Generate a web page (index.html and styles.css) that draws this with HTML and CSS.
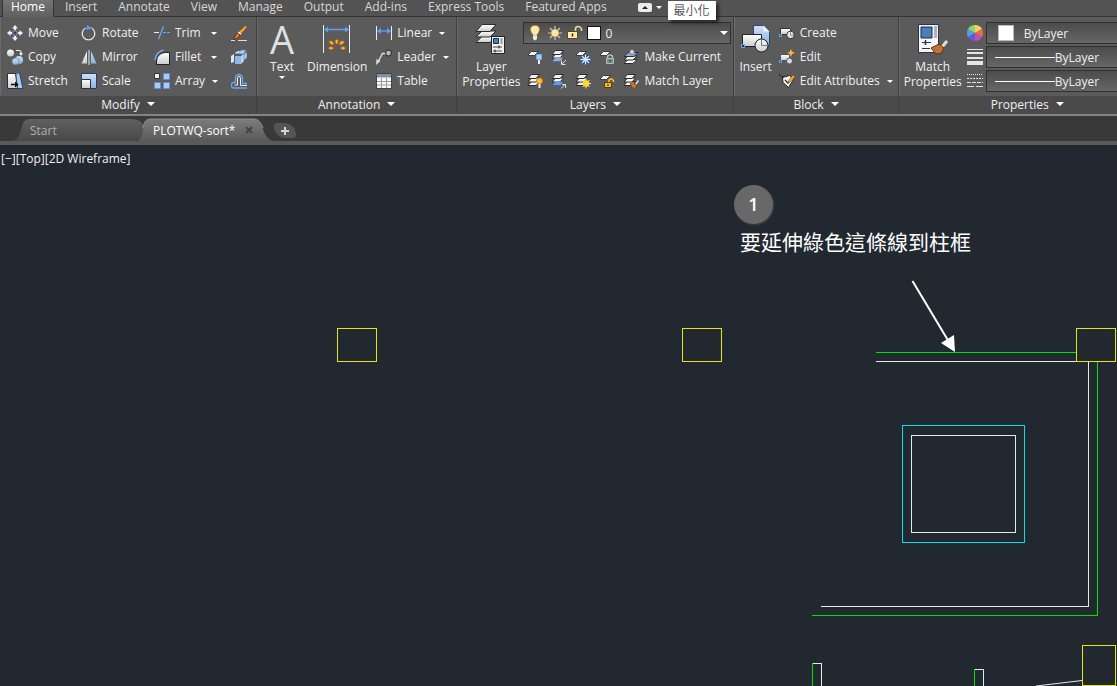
FILE: index.html
```
<!DOCTYPE html>
<html lang="zh-Hant">
<head>
    <meta charset="UTF-8">
    <meta name="viewport" content="width=device-width, initial-scale=1.0">
    <title>PLOTWQ-sort</title>
    <link rel="stylesheet" href="styles.css">
</head>
<body>
    <!-- shared gradients and layer shapes -->
    <svg class="defs" aria-hidden="true">
        <defs>
            <linearGradient id="g-white" x1="0" y1="0" x2="0" y2="1"><stop offset="0" stop-color="#ffffff"/><stop offset="1" stop-color="#c9ccd0"/></linearGradient>
            <linearGradient id="g-blue" x1="0" y1="0" x2="0" y2="1"><stop offset="0" stop-color="#cfe2f8"/><stop offset="1" stop-color="#86b0e2"/></linearGradient>
            <linearGradient id="g-tab" x1="0" y1="0" x2="0" y2="1"><stop offset="0" stop-color="#606060"/><stop offset="1" stop-color="#484848"/></linearGradient>
            <linearGradient id="g-tab-on" x1="0" y1="0" x2="0" y2="1"><stop offset="0" stop-color="#7c7c7c"/><stop offset="1" stop-color="#5a5a5a"/></linearGradient>
            <symbol id="sheets" viewBox="0 0 16 16">
                <g fill="#f4f4f4" stroke="#2c2c2c"><path d="M1 12.500l3.500-4h8l-3.500 4z"/><path d="M1 9l3.500-4h8L9 9z"/><path d="M1 5.500l3.500-4h8l-3.500 4z"/></g>
            </symbol>
            <symbol id="sheet" viewBox="0 0 16 16"><path d="M0.500 6.500l4-4h7l-4 4z" fill="#f4f4f4" stroke="#3c3c3c"/></symbol>
        </defs>
    </svg>

    <header class="ribbon">
        <nav class="ribbon-tabs">
            <button class="ribbon-tab active">Home</button>
            <button class="ribbon-tab">Insert</button>
            <button class="ribbon-tab">Annotate</button>
            <button class="ribbon-tab">View</button>
            <button class="ribbon-tab">Manage</button>
            <button class="ribbon-tab">Output</button>
            <button class="ribbon-tab">Add-ins</button>
            <button class="ribbon-tab">Express Tools</button>
            <button class="ribbon-tab">Featured Apps</button>
            <div class="minimize">
                <button class="minimize-btn" aria-label="最小化"><svg width="14" height="9" viewBox="0 0 14 9"><rect width="14" height="9" rx="2" fill="#ececec"/><path d="M4 6l3-3 3 3z" fill="#222"/></svg></button>
                <button class="caret-btn" aria-label="選項"><i class="caret"></i></button>
                <span class="tooltip">最小化</span>
            </div>
        </nav>

        <div class="panels">
            <section class="panel">
                <div class="panel-body modify">
                    <div class="col col-a">
                        <button class="tool"><svg class="icon" viewBox="0 0 16 16"><path d="M8 0l3 3.500H9V6H7V3.500H5zM8 16l3-3.500H9V10H7v2.500H5zM0 8l3.500-3v2H6v2H3.500v2zM16 8l-3.500-3v2H10v2h2.500v2z" fill="#f0f0f0"/><path d="M5 5h6v6H5z" fill="#4d4d4d"/><path d="M6 6h4v4H6z" fill="#3c3c3c" stroke="#6aa5f8"/></svg>Move</button>
                        <button class="tool"><svg class="icon" viewBox="0 0 16 16"><circle cx="3.500" cy="4" r="3.500" fill="url(#g-white)"/><circle cx="12" cy="11" r="4" fill="url(#g-blue)"/><circle cx="8.500" cy="12.500" r="3.500" fill="url(#g-blue)" stroke="#5d6f86" stroke-width=".6"/><path d="M9 1.500h3q2 0 2 2V5" fill="none" stroke="#eee" stroke-width="1.200"/><path d="M12 4h4l-2 3z" fill="#eee"/></svg>Copy</button>
                        <button class="tool"><svg class="icon" viewBox="0 0 16 16"><path d="M9 0h3.500L16 15.500H8z" fill="#a9ccf4" stroke="#27406b"/><path d="M0.500 0.500h8l2 15h-10z" fill="url(#g-white)" stroke="#303030"/><path d="M4 11.500h5" stroke="#000" stroke-width="1.500"/><path d="M8 8.500l3.500 3L8 14.500z" fill="#000"/></svg>Stretch</button>
                    </div>
                    <div class="col col-b">
                        <button class="tool"><svg class="icon" viewBox="0 0 16 16"><path d="M10.500 3A6.300 6.300 0 1 1 4.500 3" fill="none" stroke="#e4e4e4" stroke-width="1.300"/><path d="M5 3.500Q8 1.500 11 3.500" fill="none" stroke="#6aa5f8" stroke-width="1.300"/><path d="M5.500 0L10 2.500 6.500 5.500z" fill="#5e9df5"/></svg>Rotate</button>
                        <button class="tool"><svg class="icon" viewBox="0 0 16 16"><path d="M6 2v12.500H0.500z" fill="url(#g-white)"/><path d="M10 2v12.500h5.500z" fill="url(#g-blue)"/><path d="M8 1v15" stroke="#eee"/></svg>Mirror</button>
                        <button class="tool"><svg class="icon" viewBox="0 0 16 16"><path d="M0.500 0.500h15v15h-15z" fill="url(#g-blue)" stroke="#27406b"/><path d="M0.500 6.500h9v9h-9z" fill="url(#g-white)" stroke="#303030"/></svg>Scale</button>
                    </div>
                    <div class="col col-c">
                        <div class="split"><button class="tool"><svg class="icon" viewBox="0 0 16 16"><path d="M0 7.500h5" stroke="#eee"/><path d="M4.500 14L9.500 1.500" stroke="#6aa5f8" stroke-width="1.300"/><path d="M9 7.500h3m1 0h3" stroke="#6aa5f8"/></svg>Trim</button><button class="caret-btn" aria-label="Trim options"><i class="caret"></i></button></div>
                        <div class="split"><button class="tool"><svg class="icon" viewBox="0 0 16 16"><path d="M15.500 3.500v12h-13V12Q3 4.500 11 3.500z" fill="url(#g-white)" stroke="#222"/><path d="M1 11Q2 3 9.500 1" fill="none" stroke="#6aa5f8" stroke-width="1.500"/></svg>Fillet</button><button class="caret-btn" aria-label="Fillet options"><i class="caret"></i></button></div>
                        <div class="split"><button class="tool"><svg class="icon" viewBox="0 0 16 16"><path d="M0.500 0.500h5v5h-5z" fill="#eee" stroke="#333"/><path d="M9.500 0.500h6v6h-6zM0.500 9.500h6v6h-6zM9.500 9.500h6v6h-6z" fill="#a9ccf4" stroke="#6090d0"/></svg>Array</button><button class="caret-btn" aria-label="Array options"><i class="caret"></i></button></div>
                    </div>
                    <div class="col">
                        <button class="tool" aria-label="Erase"><svg class="icon" viewBox="0 0 16 16"><path d="M0 15.500h4M7 15.500h9" stroke="#ddd"/><path d="M14.500 0.500L16 2l-5.500 6.500L8 6.500z" fill="#ffa62b" stroke="#8a450c" stroke-width=".6"/><path d="M8 6.500l2.500 2L9 10 6.500 8z" fill="#f2f2f2"/><path d="M6.500 8L9 10Q7.500 14 2.500 14.500 4 12 4.500 10z" fill="#ee7a24" stroke="#5b1d08" stroke-width=".8"/></svg></button>
                        <button class="tool" aria-label="Explode"><svg class="icon" viewBox="0 0 16 16"><path d="M0 7l3-2v8l-3 1zM4 4l3-2h5l-2 2.500H4z" fill="#d7e7fa"/><path d="M4 7h6v8H4z" fill="#8db7e6"/><path d="M10 7l3-2.500V12l-3 3z" fill="#b8d3f2"/><path d="M7 5l3-4h5l-2 4zM13 5l3-2v6l-3 2z" fill="#a9ccf4" stroke="#56769c" stroke-width=".6"/></svg></button>
                        <button class="tool" aria-label="Offset"><svg class="icon" viewBox="0 0 16 16"><path d="M16 10.500h-4.500V5a3.500 3.500 0 0 0-7 0v4.500H3a2.500 2.500 0 0 0 0 5.500h13" fill="none" stroke="#6aa5f8" stroke-width="1.300"/><path d="M16 12.500H9.500V5a1.500 1.500 0 0 0-3 0v7H3.500" fill="none" stroke="#eee"/></svg></button>
                    </div>
                </div>
                <button class="panel-title">Modify<i class="caret big"></i></button>
            </section>

            <section class="panel">
                <div class="panel-body annotation">
                    <button class="tool-big"><span class="letter">A</span>Text<i class="caret"></i></button>
                    <button class="tool-big"><svg class="icon-big" viewBox="0 0 32 32"><path d="M2.500 2v28M28.500 2v28" stroke="#eee"/><path d="M4 6.500h23" stroke="#5e9df5" stroke-width="1.500"/><path d="M3 6.500l4-3v6zM28 6.500l-4-3v6z" fill="#5e9df5"/><g fill="#ffb52e" stroke="#b7660a" stroke-width=".7"><path d="M14 18l1.500-2 2 2-1 3h-1.500zM8 18h3l2 3-2 1-2.500-2zM23 18h-3l-2 3 2 1 3-2zM7 25l3-1.500 3 1.500-3 2zM25 25l-3-1.500-3 1.500 3 2z"/></g></svg>Dimension</button>
                    <div class="col">
                        <div class="split"><button class="tool"><svg class="icon" viewBox="0 0 16 16"><path d="M0.500 1v14M15.500 1v14" stroke="#eee"/><path d="M2 6h12" stroke="#5e9df5" stroke-width="1.300"/><path d="M1 6l4-3v6zM15 6l-4-3v6z" fill="#5e9df5"/></svg>Linear</button><button class="caret-btn" aria-label="Linear options"><i class="caret"></i></button></div>
                        <div class="split"><button class="tool"><svg class="icon" viewBox="0 0 16 16"><path d="M10 4.500H6.500L2.500 12" fill="none" stroke="#e4e4e4" stroke-width="1.300"/><path d="M0 16l.5-6 4 2z" fill="#ddd"/><circle cx="12.500" cy="4" r="3" fill="#b5b5b5" stroke="#222"/></svg>Leader</button><button class="caret-btn" aria-label="Leader options"><i class="caret"></i></button></div>
                        <button class="tool"><svg class="icon" viewBox="0 0 16 16"><path d="M0.500 0.500h15v15h-15z" fill="#fafafa" stroke="#444"/><path d="M1 1h14v3.500H1z" fill="#8090a4"/><path d="M1 8.500h14M1 12h14M5.500 5v10M10.500 5v10" stroke="#999"/></svg>Table</button>
                    </div>
                </div>
                <button class="panel-title">Annotation<i class="caret big"></i></button>
            </section>

            <section class="panel">
                <div class="panel-body layers">
                    <button class="tool-big"><svg class="icon-big" viewBox="0 0 32 32"><g fill="url(#g-white)" stroke="#2a2a2a"><path d="M1 19.500l6-6h14l-6 6z"/><path d="M1 14l6-6h14l-6 6z"/><path d="M1 8.500l6-7h14l-6 7z"/></g><path d="M16.500 13.500h13v17h-13z" fill="#f2f2f2" stroke="#222"/><path d="M18.500 15.500h5v5h-5z" fill="#3f7fd4" stroke="#1d2c45"/><path d="M26.500 15v6" stroke="#999" stroke-width="2"/><path d="M18 24h9M18 28h9" stroke="#444"/><path d="M24 22.500v3M20 26.500v3" stroke="#222"/></svg>Layer<br>Properties</button>
                    <div class="col">
                        <label class="combo layer-combo">
                            <svg class="icon" viewBox="0 0 16 16"><path d="M8 0.500c6 0 5 6 2 9v1H6v-1C3 6.500 2 .5 8 .5z" fill="#ffe9a3" stroke="#b38a3c" stroke-width=".6"/><path d="M6 10.500h4V14l-2 1.500L6 14z" fill="#eee"/></svg>
                            <svg class="icon" viewBox="0 0 16 16"><path d="M8 1v14M1 8h14M3 3l10 10M13 3L3 13" stroke="#cfcabd" stroke-width="1.200"/><circle cx="8" cy="8" r="4" fill="#ffe7a0" stroke="#8b8067" stroke-width=".6"/></svg>
                            <svg class="icon" viewBox="0 0 16 16"><path d="M8.500 7V4Q8.500 1.500 11 1.500T14.500 4v2" fill="none" stroke="#ecd690" stroke-width="1.600"/><path d="M0.500 6.500h10v7h-10z" fill="#ffe9a3" stroke="#56482a"/><path d="M5.500 8.500v3" stroke="#222" stroke-width="1.500"/></svg>
                            <i class="swatch dark"></i>
                            <select aria-label="Layer"><option>0</option></select>
                            <i class="caret big"></i>
                        </label>
                        <div class="icon-row">
                            <button class="tool" aria-label="Off"><svg class="icon" viewBox="0 0 16 16"><use href="#sheet"/><path d="M9.500 5.500h5v5h-5z" fill="#a9ccf4" stroke="#6aa5f8"/><path d="M11 11h2v4h-2z" fill="#eee"/></svg></button>
                            <button class="tool" aria-label="Isolate"><svg class="icon" viewBox="0 0 16 16"><use href="#sheets"/><path d="M1 12.500l3.500-4h8l-3.500 4z" fill="#86b0e2"/><path d="M15 11l-4 4M10.500 11.500V15.500h4" fill="none" stroke="#ddd"/></svg></button>
                            <button class="tool" aria-label="Freeze"><svg class="icon" viewBox="0 0 16 16"><use href="#sheet"/><circle cx="10.500" cy="10.500" r="5" fill="#274d80"/><path d="M10.500 5.500v10M5.500 10.500h10M7 7l7 7M14 7l-7 7" stroke="#d5e8ff" stroke-width="1.300"/></svg></button>
                            <button class="tool" aria-label="Lock"><svg class="icon" viewBox="0 0 16 16"><use href="#sheet"/><path d="M8.500 10V8q0-2 2.500-2t2.500 2v2" fill="none" stroke="#a9bdbb" stroke-width="1.500"/><path d="M7.500 9.500h7v5h-7z" fill="#6f8f8d" stroke="#a9bdbb"/><path d="M11 11v2" stroke="#333"/></svg></button>
                            <button class="tool"><svg class="icon" viewBox="0 0 16 16"><g fill="#f4f4f4" stroke="#2c2c2c"><path d="M1 14.500l4-4h9l-4 4z"/><path d="M1 11l4-4h9l-4 4z"/><path d="M1 7.500l4-4h10l-4 4z" fill="#7fb0ee"/></g><circle cx="9" cy="3" r="2.500" fill="#d5d5d5" stroke="#555" stroke-width=".7"/></svg>Make Current</button>
                        </div>
                        <div class="icon-row">
                            <button class="tool" aria-label="Turn all on"><svg class="icon" viewBox="0 0 16 16"><use href="#sheets"/><circle cx="12.500" cy="8" r="3" fill="#ffbd3c" stroke="#e8750c"/><path d="M11.500 11h2v4h-2z" fill="#eee"/></svg></button>
                            <button class="tool" aria-label="Unisolate"><svg class="icon" viewBox="0 0 16 16"><use href="#sheets"/><path d="M1 12.500l3.500-4h8l-3.500 4z" fill="#5e9df5"/><path d="M10 15.500l4-4M11 11.500h3.500V15" fill="none" stroke="#ddd"/></svg></button>
                            <button class="tool" aria-label="Thaw all"><svg class="icon" viewBox="0 0 16 16"><use href="#sheets"/><path d="M11 5.500v10M6 10.500h10M7.500 7l7 7M14.500 7l-7 7" stroke="#f0e8b0"/><circle cx="11" cy="10.500" r="3.300" fill="#ffdc1e"/></svg></button>
                            <button class="tool" aria-label="Unlock"><svg class="icon" viewBox="0 0 16 16"><use href="#sheet"/><path d="M10 10V8q0-2 2-2t2.500 2v1" fill="none" stroke="#ffc52e" stroke-width="1.500"/><path d="M5.500 9.500h7v5h-7z" fill="#ffb819" stroke="#5b3d05"/><path d="M9 11v2" stroke="#222"/></svg></button>
                            <button class="tool"><svg class="icon" viewBox="0 0 16 16"><use href="#sheets"/><path d="M15.500 7.500l-3 4" stroke="#ddd" stroke-width="1.500"/><path d="M7 10.500l3-1 4 3-2.500 3-2.500-1z" fill="#c8782c" stroke="#6d3a0c" stroke-width=".7"/></svg>Match Layer</button>
                        </div>
                    </div>
                </div>
                <button class="panel-title">Layers<i class="caret big"></i></button>
            </section>

            <section class="panel">
                <div class="panel-body block">
                    <button class="tool-big"><svg class="icon-big" viewBox="0 0 32 32"><path d="M13.500 2.500h10l6 6v14h-16z" fill="url(#g-blue)" stroke="#2d4669"/><path d="M23.500 2.500l6 6h-6z" fill="#eef5ff"/><path d="M2.500 11.500h19v12h-19z" fill="url(#g-white)" stroke="#222"/><circle cx="21.500" cy="22.500" r="6.500" fill="url(#g-white)" stroke="#222"/><path d="M21.500 16v6.500H28" fill="none" stroke="#777"/><path d="M1.500 21.500h3v3h-3z" fill="#333" stroke="#6aa5f8"/></svg>Insert</button>
                    <div class="col">
                        <button class="tool"><svg class="icon" viewBox="0 0 16 16"><path d="M1.500 3.500h10v6h-10z" fill="url(#g-white)" stroke="#333"/><circle cx="11.500" cy="10" r="3.800" fill="url(#g-white)" stroke="#333"/><path d="M11.500 6.500V10H15" fill="none" stroke="#888"/><path d="M0.500 9.500h2v2h-2z" fill="#333" stroke="#6aa5f8"/></svg>Create</button>
                        <button class="tool"><svg class="icon" viewBox="0 0 16 16"><path d="M1.500 5.500h9v6h-9z" fill="url(#g-white)" stroke="#555"/><circle cx="10.500" cy="12" r="3" fill="#cfdded" stroke="#555"/><path d="M12 0l1 2.500L16 4l-3 1-1 3-1.500-3L8 4l2.500-1z" fill="#ffb52e"/><path d="M0.500 11.500h2v2h-2z" fill="#333" stroke="#6aa5f8"/></svg>Edit</button>
                        <div class="split"><button class="tool"><svg class="icon" viewBox="0 0 16 16"><path d="M3.500 4.500l7-2 4 4-5 8-5.500-5z" fill="#f4f4f4" stroke="#222"/><path d="M0.500 1q0 3 4.500 3" fill="none" stroke="#222"/><path d="M6 7l3 3 3-3" fill="none" stroke="#333" stroke-width="1.300"/><path d="M14 2l2 1.500-5 5.500-2 .5.500-2z" fill="#ffad28" stroke="#8b4a0a" stroke-width=".6"/></svg>Edit Attributes</button><button class="caret-btn" aria-label="Edit Attributes options"><i class="caret"></i></button></div>
                    </div>
                </div>
                <button class="panel-title">Block<i class="caret big"></i></button>
            </section>

            <section class="panel panel-last">
                <div class="panel-body properties">
                    <button class="tool-big"><svg class="icon-big" viewBox="0 0 32 32"><path d="M1.500 1.500h20v28h-20z" fill="#f4f6f9" stroke="#26334a"/><path d="M4 4h11v11H4z" fill="#4a7fb8" stroke="#1d2c45"/><path d="M18.500 3v12" stroke="#aab3bf" stroke-width="3"/><path d="M5 19.500h9M5 25.500h8" stroke="#333"/><path d="M8.500 17v5" stroke="#26334a" stroke-width="1.500"/><path d="M30 18l-5 6" stroke="#e8dccb" stroke-width="3"/><path d="M14 25l8-4 5 4-3 5.500-5 .5z" fill="#bd7338" stroke="#5b3110"/></svg>Match<br>Properties</button>
                    <div class="col prop-rows">
                        <div class="prop-row">
                            <svg class="icon" viewBox="0 0 16 16"><path d="M8 8V0a8 8 0 0 1 7 4z" fill="#f5d25c"/><path d="M8 8l7-4a8 8 0 0 1 0 8z" fill="#ea6a4a"/><path d="M8 8l7 4a8 8 0 0 1-7 4z" fill="#b856b8"/><path d="M8 8v8a8 8 0 0 1-7-4z" fill="#6a56cc"/><path d="M8 8l-7 4a8 8 0 0 1 0-8z" fill="#4f9fe6"/><path d="M8 8L1 4a8 8 0 0 1 7-4z" fill="#8fd66a"/></svg>
                            <label class="combo"><i class="swatch"></i><select aria-label="Object color"><option>ByLayer</option></select></label>
                        </div>
                        <div class="prop-row">
                            <svg class="icon" viewBox="0 0 16 16"><path d="M0 0h16v1H0zM0 3h16v2H0zM0 8h16v2H0zM0 12h16v4H0z" fill="#e4e4e4"/></svg>
                            <label class="combo"><i class="line-sample"></i><select aria-label="Lineweight"><option>ByLayer</option></select></label>
                        </div>
                        <div class="prop-row">
                            <svg class="icon" viewBox="0 0 16 16" stroke="#e4e4e4"><path d="M0 1.500h16" stroke-dasharray="1 1"/><path d="M0 5.500h16" stroke-dasharray="2 1"/><path d="M0 9.500h16" stroke-dasharray="4 1"/><path d="M0 13.500h16" stroke-dasharray="7 2"/></svg>
                            <label class="combo"><i class="line-sample"></i><select aria-label="Linetype"><option>ByLayer</option></select></label>
                        </div>
                    </div>
                </div>
                <button class="panel-title">Properties<i class="caret big"></i></button>
            </section>
        </div>
    </header>

    <nav class="file-tabs">
        <button class="file-tab"><svg class="tab-shape" viewBox="0 0 132 23" preserveAspectRatio="none"><path d="M0 23Q7 22 9 12 11 1 17 1H120Q131 1 132 11V13Q131 23 120 23z" fill="url(#g-tab)"/></svg>Start</button>
        <div class="file-tab active"><svg class="tab-shape" viewBox="0 0 136 23" preserveAspectRatio="none"><path d="M0 23Q4 20 5 12 6 1 12 1H116Q122 1 125 11 128 22 136 23z" fill="url(#g-tab-on)"/><path d="M5 10Q6 1 12 1H116Q122 1 125 10" fill="none" stroke="#909090"/></svg><button class="file-name">PLOTWQ-sort*</button><button class="close" aria-label="Close"><svg width="8" height="8" viewBox="0 0 8 8"><path d="M1 1l6 6M7 1L1 7" stroke="#444" stroke-width="2"/></svg></button></div>
        <button class="new-tab" aria-label="New"><svg width="8" height="8" viewBox="0 0 8 8"><path d="M4 0v8M0 4h8" stroke="#d5d5d5" stroke-width="2"/></svg></button>
    </nav>

    <main class="model">
        <div class="view-label"><button>[−]</button><button>[Top]</button><button>[2D Wireframe]</button></div>
        <svg class="drawing">
            <g fill="none" shape-rendering="crispEdges">
                <!-- beams -->
                <path d="M876 216.500H1076M1088.500 217V461.500H821" stroke="#e8e8e8"/>
                <path d="M876 207.500H1077" stroke="#00e000"/>
                <path d="M1097.500 217V470.500" stroke="#00e000"/>
                <path d="M812 470.500H1098" stroke="#00e000"/>
                <!-- columns -->
                <g stroke="#e6e600">
                    <rect x="337.500" y="183.500" width="39" height="33"/>
                    <rect x="682.500" y="183.500" width="39" height="33"/>
                    <rect x="1076.500" y="183.500" width="39" height="33"/>
                    <rect x="1082.500" y="500.500" width="33" height="40"/>
                </g>
                <!-- opening -->
                <rect x="902.500" y="280.500" width="122" height="117" stroke="#00e0e8"/>
                <rect x="911.500" y="290.500" width="104" height="97" stroke="#e8e8e8"/>
                <!-- stubs -->
                <path d="M812 518.500H821.500V560M974 524.500H983.500V560" stroke="#e8e8e8"/>
                <path d="M812.500 518V560M974.500 524V560" stroke="#00e000"/>
            </g>
            <path d="M1036 541L1082 535.500" stroke="#e8e8e8"/>
            <path d="M912.500 136L949 197" stroke="#fff" stroke-width="2"/>
            <path d="M955 207L941 198 954 190z" fill="#fff"/>
        </svg>
        <div class="note">
            <span class="badge">1</span>
            <p>要延伸綠色這條線到柱框</p>
        </div>
    </main>
</body>
</html>
```
FILE: styles.css
```
:root {
    --ribbon: #5b5b5b;
    --text: #f0f0f0;
    --line: #343434;
    --combo: linear-gradient(#4c4c4c, #666);
    --canvas: #212830;
}

* {
    margin: 0;
    padding: 0;
    box-sizing: border-box;
}

body {
    height: 100vh;
    display: flex;
    flex-direction: column;
    overflow: hidden;
    background: var(--canvas);
    color: var(--text);
    font-family: "Open Sans", "Noto Sans", "Noto Sans CJK TC", sans-serif;
    font-size: 12px;
    line-height: 15px;
}

button,
select {
    font: inherit;
    color: inherit;
    background: none;
    border: none;
    white-space: nowrap;
}

.defs {
    position: absolute;
    width: 0;
    height: 0;
}

.caret {
    flex: none;
    border: 3px solid transparent;
    border-top-color: #fff;
    border-bottom: none;
}

.caret.big {
    border-width: 4px;
    border-bottom: none;
}

.caret-btn {
    display: flex;
    align-items: center;
}

/* ribbon */
.ribbon {
    flex: none;
    background: var(--ribbon);
}

.ribbon-tabs {
    display: flex;
    gap: 1px;
    height: 17px;
    padding-left: 2px;
    background: #535353;
    border-bottom: 1px solid var(--line);
}

.ribbon-tab {
    height: 16px;
    padding: 0 10px 3px;
    line-height: 13px;
    color: #d8d8d8;
}

.ribbon-tab.active {
    height: 17px;
    padding: 0 8px 4px;
    color: #fff;
    background: linear-gradient(#757575, #606060);
    border: solid var(--line);
    border-width: 0 1px;
}

.minimize {
    position: relative;
    display: flex;
    align-items: center;
    gap: 4px;
    padding: 0 6px 2px 20px;
}

.minimize-btn {
    display: flex;
}

.tooltip {
    position: absolute;
    left: 100%;
    top: 1px;
    z-index: 2;
    padding: 2px 6px;
    background: #fff;
    color: #575757;
    box-shadow: 3px 3px 3px rgba(0, 0, 0, 0.5);
    white-space: nowrap;
}

.panels {
    display: flex;
    height: 99px;
    border-bottom: 2px solid #848484;
}

.panel {
    flex: none;
    display: flex;
    flex-direction: column;
    border-right: 1px solid #3f3f3f;
    box-shadow: inset 1px 0 #6a6a6a;
}

.panel-last {
    flex: 1 0 258px;
}

.panel-body {
    flex: 1;
    display: flex;
    padding: 4px 0 0;
}

.panel-title {
    height: 18px;
    display: flex;
    align-items: center;
    justify-content: center;
    gap: 7px;
    padding-bottom: 2px;
    background: #4a4a4a;
}

.col {
    display: flex;
    flex-direction: column;
}

.tool {
    height: 24px;
    display: flex;
    align-items: center;
    gap: 5px;
    padding-bottom: 1px;
}

.icon {
    flex: none;
    width: 16px;
    height: 16px;
}

.icon-big {
    width: 32px;
    height: 32px;
}

.split {
    display: flex;
    gap: 7px;
}

.tool-big {
    display: flex;
    flex-direction: column;
    align-items: center;
    padding-top: 2px;
}

.tool-big .icon-big,
.letter {
    margin-bottom: 4px;
}

.tool-big .caret {
    margin-top: 2px;
}

.letter {
    height: 32px;
    font-size: 38px;
    line-height: 32px;
    color: #e0e0e0;
}

.modify {
    padding-left: 7px;
}

.col-a {
    width: 74px;
}

.col-b {
    width: 73px;
}

.col-c {
    width: 77px;
}

.col-c .split {
    width: 63px;
    justify-content: space-between;
}

.modify .col:last-child {
    width: 25px;
}

.annotation {
    padding: 4px 5px 0 13px;
    gap: 13px;
}

.annotation .col {
    width: 75px;
    margin-left: -4px;
}

.layers {
    padding: 4px 2px 0 5px;
    gap: 3px;
}

.combo {
    display: flex;
    align-items: center;
    height: 22px;
    background: var(--combo);
    border: 1px solid #303030;
}

.combo select {
    flex: 1;
    min-width: 0;
    height: 20px;
    appearance: none;
    outline: none;
}

.swatch {
    width: 16px;
    height: 16px;
    background: #fff;
    border: 1px solid #bbb;
}

.swatch.dark {
    width: 14px;
    height: 14px;
    border-color: #111;
}

.layer-combo {
    width: 208px;
    margin: 1px 0;
    padding: 0 2px 0 3px;
    gap: 4px;
}

.icon-row {
    display: flex;
    gap: 8px;
    padding-left: 4px;
}

.block {
    padding: 4px 5px 0 5px;
    gap: 7px;
}

.properties {
    padding-left: 5px;
    gap: 5px;
}

.prop-rows {
    flex: 1;
}

.prop-row {
    height: 24px;
    display: flex;
    align-items: center;
    gap: 3px;
}

.prop-row .combo {
    flex: 1;
    padding-left: 8px;
}

.prop-row .swatch {
    margin: 0 10px 0 3px;
}

.line-sample {
    width: 60px;
    height: 1px;
    background: #fff;
}

/* drawing tabs */
.file-tabs {
    flex: none;
    height: 29px;
    display: flex;
    align-items: flex-start;
    padding: 2px 0 0 12px;
    background: #393939;
    border-bottom: 4px solid #5a5a5a;
}

.file-tab {
    position: relative;
    z-index: 0;
    display: flex;
    align-items: center;
    width: 132px;
    height: 23px;
    padding: 1px 0 0 18px;
    color: #b0b0b0;
}

.file-tab.active {
    width: 136px;
    margin-left: -6px;
    padding-left: 15px;
    gap: 10px;
    color: #fff;
}

.close {
    display: flex;
}

.tab-shape {
    position: absolute;
    inset: 0;
    width: 100%;
    height: 100%;
    z-index: -1;
}

.new-tab {
    display: flex;
    align-items: center;
    justify-content: center;
    width: 22px;
    height: 15px;
    margin-top: 5px;
    background: #555;
    border-radius: 3px 12px 3px 12px;
}

/* model space */
.model {
    position: relative;
    flex: 1;
    min-height: 0;
    overflow: hidden;
}

.view-label {
    display: flex;
    padding: 6px 1px;
}

.drawing {
    position: absolute;
    inset: 0;
    width: 100%;
    height: 100%;
    pointer-events: none;
}

.note {
    position: absolute;
    left: 734px;
    top: 40px;
}

.badge {
    display: flex;
    align-items: center;
    justify-content: center;
    width: 39px;
    height: 39px;
    border-radius: 50%;
    background: #686868;
    box-shadow: 1px 1px 2px #444;
    color: #fff;
    font-size: 18px;
    font-weight: 600;
}

.note p {
    padding: 2px 6px;
    color: #fff;
    font-family: "Noto Sans CJK TC", sans-serif;
    font-size: 21px;
    line-height: 30px;
    white-space: nowrap;
}
```
